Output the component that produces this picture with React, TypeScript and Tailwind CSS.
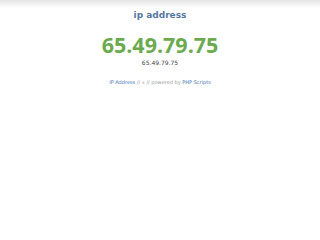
export default function App() {
  return (
    <div className="w-[320px] h-[240px] bg-white" style={{ fontFamily: '"DejaVu Sans", sans-serif' }}>
      {/* top shade */}
      <div className="h-[8px] bg-gradient-to-b from-[#e4e4e4] to-white" />

      <div className="flex flex-col items-center">
        <h1 className="mt-[1px] text-[9px] leading-[12px] font-bold text-[#55779f]">ip address</h1>

        <div
          className="mt-[10px] text-[21.5px] leading-[28px] font-bold text-[#6caa50]"
          style={{ fontFamily: '"Open Sans", sans-serif' }}
        >
          65.49.79.75
        </div>
        <div className="text-[6px] leading-[8px] text-[#444]">65.49.79.75</div>

        <div className="mt-[11px] text-[5px] leading-[8px] text-[#999]">
          <span className="text-[#3a6fb5]">IP Address</span> // » // powered by{' '}
          <span className="text-[#3a6fb5]">PHP Scripts</span>
        </div>
      </div>
    </div>
  )
}
